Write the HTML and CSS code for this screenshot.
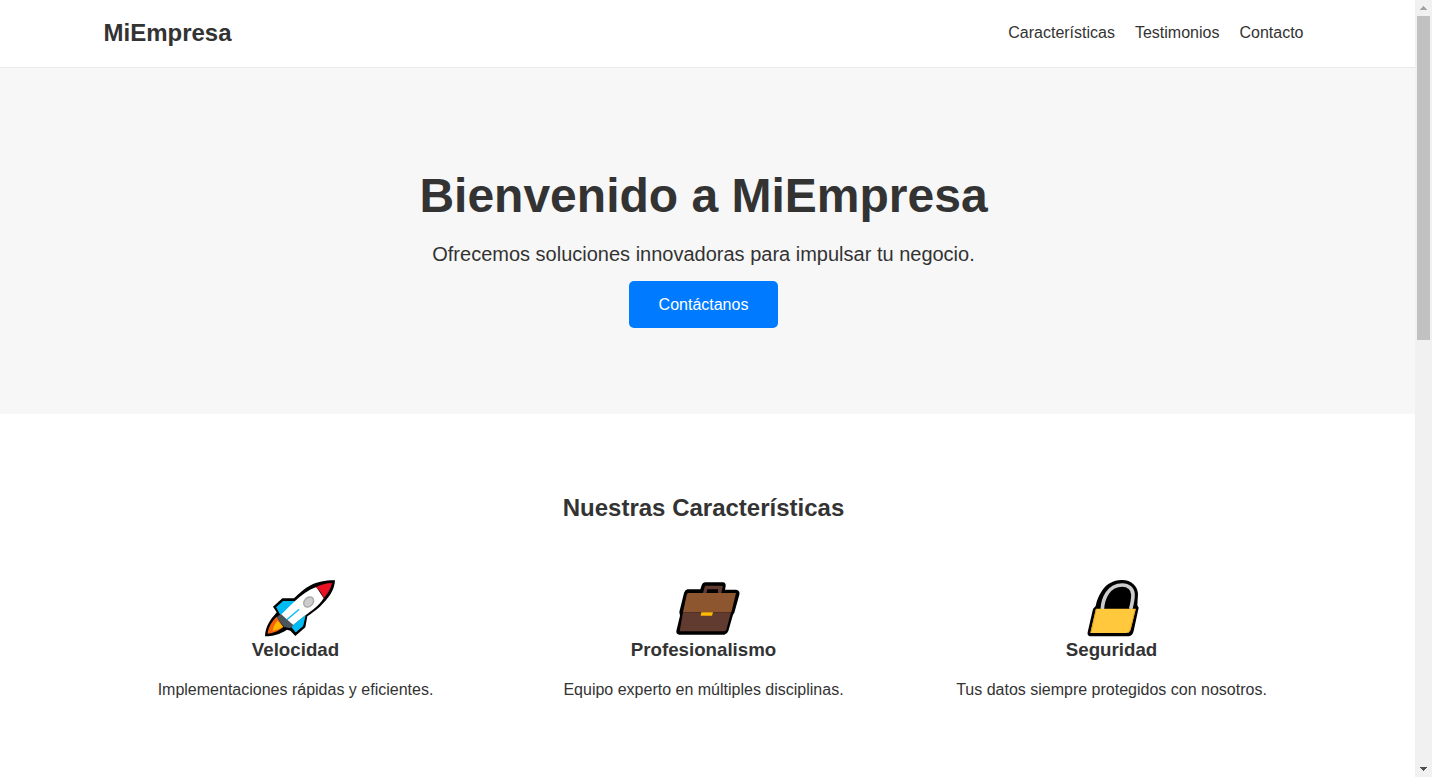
FILE: index.html
```html
<!DOCTYPE html>
<html lang="es">
<head>
<meta charset="utf-8">
<title>MiEmpresa</title>
<link rel="stylesheet" href="styles.css">
</head>
<body>
<div class="window">
  <div class="page">
    <header class="header">
      <div class="container header-row">
        <div class="logo">MiEmpresa</div>
        <nav class="nav"><a href="#features">Características</a><a href="#testimonials">Testimonios</a><a href="#contact">Contacto</a></nav>
      </div>
    </header>
    <section class="hero">
      <h1>Bienvenido a MiEmpresa</h1>
      <p>Ofrecemos soluciones innovadoras para impulsar tu negocio.</p>
      <a class="button" href="#contact">Contáctanos</a>
    </section>
    <section class="features" id="features">
      <h2>Nuestras Características</h2>
      <div class="container feature-grid">
        <article class="feature">
          <svg class="icon" viewBox="-12 -1 270 225" aria-hidden="true">
            <path d="M240 30C218 29 187 34 167 45C149 54 133 69 117 84H82L54 109L65 126L61 131C48 145 31 168 30 198C55 198 73 192 96 178L106 181L121 197L151 171L157 138C172 127 193 113 205 98C225 79 239 55 240 30Z"/>
            <path fill="#00bcf2" d="M85 92H120L87 130L76 133L64 111ZM151 135L144 167L122 186L108 169Z"/>
            <path fill="#fff" d="M184 50C160 58 138 76 119 93L78 132L112 166L151 135C172 120 191 107 206 84Z"/>
            <path fill="#e81224" d="M182 51C197 43 214 38 231 38C227 57 217 71 206 84C201 69 192 57 182 51Z"/>
            <path fill="#f7630c" d="M65 139L85 170C71 182 55 189 38 190C39 170 51 153 65 139Z"/>
            <path fill="#ffb900" d="M68 151L84 169C73 176 62 179 53 181C55 169 60 159 68 151Z"/>
            <path fill="#00bcf2" d="M85 92H118L84 127L76 133L64 111ZM152 134L144 167L122 186L111 167Z"/>
            <path fill="#4b555c" d="M77 131L115 164L106 174L87 170L65 141Z"/>
            <path fill="none" stroke="#00bcf2" stroke-width="4" stroke-linecap="round" d="M97 147L131 118"/>
            <ellipse cx="161" cy="95" rx="13" ry="17" transform="rotate(42 161 95)" fill="#ccc" stroke="#a7a7a7" stroke-width="4"/>
          </svg>
          <h3>Velocidad</h3>
          <p>Implementaciones rápidas y eficientes.</p>
        </article>
        <article class="feature">
          <svg class="icon" viewBox="-18 -1 270 225" aria-hidden="true">
            <path d="M67 57H106L110 45Q113 36 121 36H174Q183 37 182 48L180 58H214Q226 61 223 73L208 127L204 133L190 182Q187 191 178 193H43Q33 192 34 182L45 136L43 125L57 68Q60 59 67 57Z"/>
            <path fill="#613b30" d="M114 68L119 50Q120 46 124 46H170Q174 46 173 50L169 68H159V57H127L124 68Z"/>
            <path fill="#8e562e" d="M69 68H213L199 126H54L65 74Q66 69 69 68Z"/>
            <path fill="#613b30" d="M54 126H198L184 178Q182 183 176 183H44Z"/>
            <path fill="#ffb900" d="M109 126H144L141 136H107Z"/>
          </svg>
          <h3>Profesionalismo</h3>
          <p>Equipo experto en múltiples disciplinas.</p>
        </article>
        <article class="feature">
          <svg class="icon" viewBox="-24 -1 270 225" aria-hidden="true">
            <path d="M62 107C65 91 70 78 79 64C94 40 117 28 142 29C168 29 188 47 189 70L187 105L191 112L176 182Q173 196 161 198H46Q36 197 38 186L54 116Z"/>
            <path fill="none" stroke="#ccc" stroke-width="11" d="M82 116C83 97 89 80 97 68C108 52 123 44 142 44C160 44 174 56 174 73C174 89 171 101 167 116"/>
            <path fill="#ffc83d" d="M63 115H182L167 177Q164 188 153 188H46Z"/>
            <path fill="none" stroke="#eaa51c" stroke-width="3" d="M64 116L48 186M181 116L166 177Q164 184 159 187"/>
          </svg>
          <h3>Seguridad</h3>
          <p>Tus datos siempre protegidos con nosotros.</p>
        </article>
      </div>
    </section>
  </div>
  <div class="scrollbar" aria-hidden="true">
    <svg class="arrow" viewBox="0 0 17 16" shape-rendering="crispEdges"><path fill="#a3a3a3" d="M8 6h1v1h1v1h1v1h1v1H5V9h1V8h1V7h1z"/></svg>
    <div class="thumb"></div>
    <svg class="arrow arrow-down" viewBox="0 0 17 16" shape-rendering="crispEdges"><path fill="#505050" d="M5 6h7v1h-1v1h-1v1H9v1H8V9H7V8H6V7H5z"/></svg>
  </div>
</div>
</body>
</html>
```
FILE: styles.css
```css
* { box-sizing: border-box; }
body {
  margin: 0;
  overflow: hidden;
  color: #333;
  font: 16px/26px Arial, "Liberation Sans", sans-serif;
}
h1, h2, h3, p { margin: 0; }
.window { display: flex; height: 777px; overflow: hidden; }
.page { flex: 1; background: #fff; }
.container { width: 1200px; margin: 0 auto; }
.header {
  height: 68px;
  padding: 0 8px 0 0;
  border-bottom: 1px solid #eaeaea;
}
.header-row { display: flex; justify-content: space-between; padding-top: 14px; }
.logo { font-size: 24px; font-weight: bold; line-height: 38px; }
.nav { display: flex; gap: 20px; line-height: 38px; }
.nav a { color: #333; text-decoration: none; }
.hero {
  height: 346px;
  padding: 101px 8px 0 0;
  background: #f7f7f7;
  text-align: center;
}
.hero h1 { font-size: 48px; line-height: 54px; }
.hero p { margin-top: 15px; font-size: 20px; line-height: 32px; }
.button {
  display: block;
  width: 149px;
  height: 47px;
  margin: 11px auto 0;
  border-radius: 5px;
  background: #007bff;
  color: #fff;
  line-height: 47px;
  text-decoration: none;
}
.features { padding: 80px 8px 0 0; text-align: center; }
.features h2 { font-size: 24px; line-height: 28px; }
.feature-grid { display: grid; grid-template-columns: repeat(3, 1fr); gap: 24px; padding-top: 48px; }
.icon { display: block; width: 90px; height: 75px; margin: 0 auto; }
.feature h3 { margin-top: -7px; font-size: 18.72px; line-height: 24px; }
.feature p { margin-top: 15px; }
.scrollbar { display: flex; flex-direction: column; width: 17px; background: #f1f1f1; }
.arrow { display: block; width: 17px; height: 16px; }
.thumb { width: 13px; height: 324px; margin-left: 2px; background: #c1c1c1; }
.arrow-down { margin-top: auto; }
```
